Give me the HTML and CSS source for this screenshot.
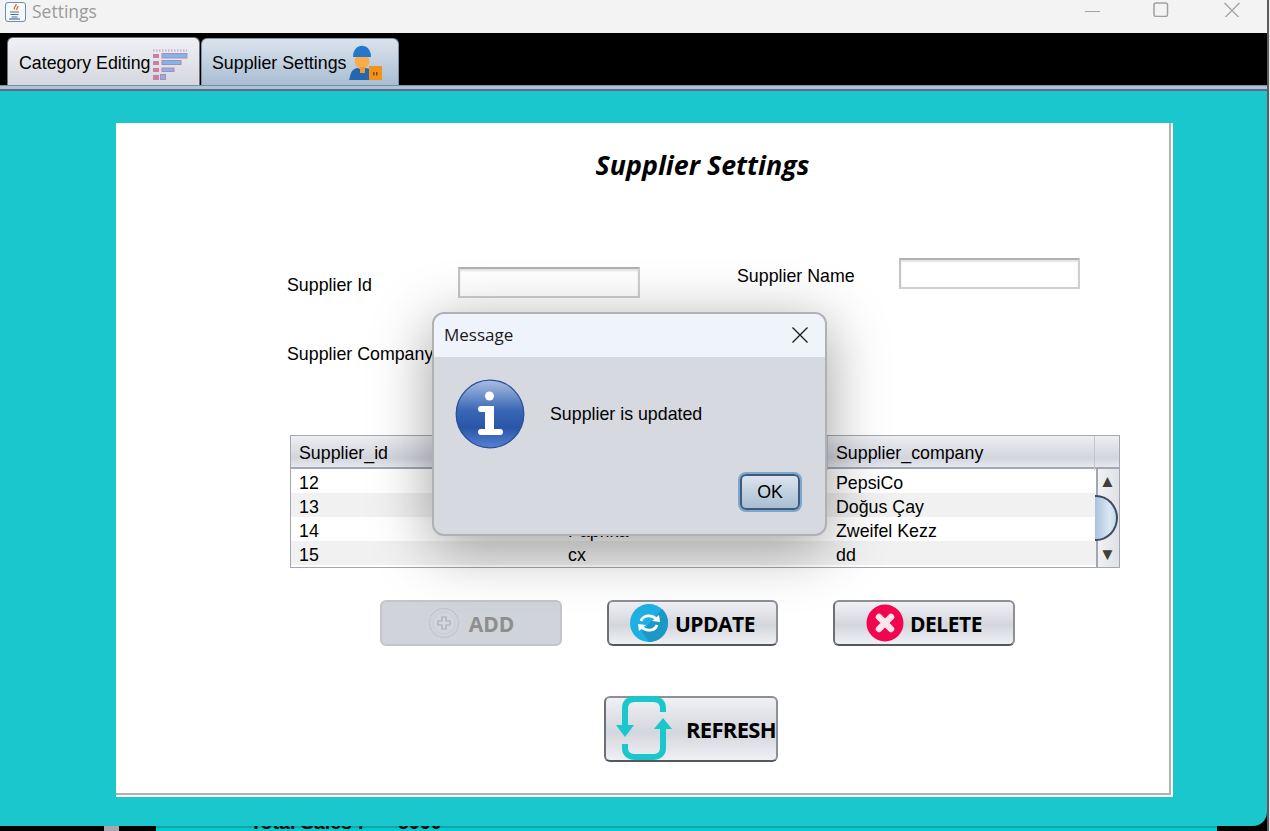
FILE: index.html
```html
<!DOCTYPE html>
<html lang="en">
<head>
<meta charset="utf-8">
<title>Settings</title>
<link rel="stylesheet" href="styles.css">
</head>
<body>
<div class="desktop">
  <div class="window">
    <header class="titlebar">
      <svg class="java" width="24" height="22" viewBox="0 0 24 22">
        <rect x="3.500" y="1.500" width="20" height="19" rx="2.500" fill="#f6f8fb" stroke="#6d8eb0"/>
        <path d="M14 3c1 2-3 3-1.500 5.500M16 5c0 2-2 2-1 4" fill="none" stroke="#e2711d" stroke-width="1.400"/>
        <path d="M8 11h9M8.500 13.500h8M9.500 16h6" stroke="#4d6f95" stroke-width="1.200"/>
        <path d="M7 18h11" stroke="#4d6f95" stroke-width="1.200"/>
      </svg>
      <span class="app-title">Settings</span>
      <div class="controls">
        <svg class="ctl-min" width="16" height="16" viewBox="0 0 16 16"><path d="M0 10.500h15" stroke="#a3a3a3" stroke-width="1"/></svg>
        <svg class="ctl-max" width="16" height="16" viewBox="0 0 16 16"><rect x="1" y="2" width="13.500" height="13.500" rx="2" fill="none" stroke="#a0a0a0" stroke-width="1.500"/></svg>
        <svg class="ctl-close" width="16" height="16" viewBox="0 0 16 16"><path d="M.5 2l15 15M15.500 2l-15 15" stroke="#a0a0a0" stroke-width="1.200"/></svg>
      </div>
    </header>

    <nav class="tabs">
      <div class="tab tab-inactive">
        <span class="tab-label">Category Editing</span>
        <svg width="36" height="33" viewBox="0 0 36 33">
          <path d="M0 2.500h34" stroke="#cdb4cc" stroke-width="2.500" stroke-dasharray="1.500 1.500"/>
          <rect x="9" y="5.500" width="25" height="4.500" fill="#7fb6e8" stroke="#b489b8"/>
          <rect x="9" y="12.500" width="19" height="4" fill="#7fb6e8" stroke="#a98ab8"/>
          <rect x="9" y="20" width="12" height="3.500" fill="#7fb6e8" stroke="#b489b8"/>
          <rect x="7.500" y="26.500" width="5" height="5" fill="#7fb6e8" stroke="#b489b8"/>
          <rect x="0" y="6" width="6" height="4" fill="#c77fa5"/>
          <rect x="0" y="13" width="6" height="4" fill="#c77fa5"/>
          <rect x="0" y="20" width="6" height="4" fill="#c77fa5"/>
          <rect x="0" y="27" width="6" height="5" fill="#c77fa5"/>
        </svg>
      </div>
      <div class="tab tab-active">
        <span class="tab-label">Supplier Settings</span>
        <svg width="34" height="36" viewBox="0 0 34 36">
          <path d="M0 35l2-7c1-3 4-5 7-5l4 2 4-2 4 1v11z" fill="#2566ad"/>
          <circle cx="13" cy="16" r="7.500" fill="#f8ad4a"/>
          <path d="M4 12C4-3 22-3 22 12z" fill="#2578c8"/>
          <rect x="11" y="22" width="5" height="6" fill="#f39a2d"/>
          <rect x="20" y="21" width="13" height="14" fill="#f39218"/>
          <rect x="24" y="27" width="1.500" height="3.500" fill="#7a4a10"/>
          <rect x="27" y="27" width="1.500" height="3.500" fill="#7a4a10"/>
        </svg>
      </div>
    </nav>
    <div class="tab-rule"></div>

    <main class="content">
      <section class="panel">
        <h1 class="heading">Supplier Settings</h1>

        <div class="form-row">
          <div class="field field-id">
            <label class="field-label">Supplier Id</label>
            <span class="input"></span>
          </div>
          <div class="field field-name">
            <label class="field-label">Supplier Name</label>
            <span class="input"></span>
          </div>
        </div>
        <div class="company"><label class="field-label">Supplier Company</label></div>

        <div class="table">
          <div class="table-head">
            <span class="th">Supplier_id</span>
            <span class="th">Supplier_name</span>
            <span class="th">Supplier_company</span>
            <span class="th"></span>
          </div>
          <div class="table-body">
            <div class="rows">
              <div class="row"><span>12</span><span>Lays</span><span>PepsiCo</span></div>
              <div class="row"><span>13</span><span>Lipton</span><span>Doğus Çay</span></div>
              <div class="row"><span>14</span><span>Paprika</span><span>Zweifel Kezz</span></div>
              <div class="row"><span>15</span><span>cx</span><span>dd</span></div>
            </div>
            <div class="scrollbar">
              <span class="arrow">▲</span>
              <span class="thumb"></span>
              <span class="arrow">▼</span>
            </div>
          </div>
        </div>

        <div class="actions">
          <button class="btn btn-disabled" disabled>
            <svg width="32" height="32" viewBox="0 0 32 32">
              <circle cx="16" cy="16" r="14.500" fill="none" stroke="#b9bbc0" stroke-width="1.200" stroke-dasharray="1.500 1"/>
              <circle cx="16" cy="16" r="11" fill="#d3d5da" stroke="#c9cbd0"/>
              <path d="M14 10h4v4h4v4h-4v4h-4v-4h-4v-4h4z" fill="#d6d8dd" stroke="#a9abb0" stroke-width="1.200"/>
            </svg>
            <span>ADD</span>
          </button>
          <button class="btn btn-update">
            <svg width="38" height="38" viewBox="0 0 38 38">
              <circle cx="19" cy="19" r="19" fill="#1fb0e3"/>
              <path d="M19 38a19 19 0 0 0 19-19 19 19 0 0 0-6-14L12 28z" fill="#1c98c6"/>
              <path d="M11 17c2-6 11-7 15-2" fill="none" stroke="#fff" stroke-width="2.800"/>
              <path d="M22 17l8 1-1-7z" fill="#fff"/>
              <path d="M27 21c-2 6-11 7-15 2" fill="none" stroke="#fff" stroke-width="2.800"/>
              <path d="M16 21l-8-1 1 7z" fill="#fff"/>
            </svg>
            <span>UPDATE</span>
          </button>
          <button class="btn btn-delete">
            <svg width="38" height="38" viewBox="0 0 38 38">
              <circle cx="19" cy="19" r="18.500" fill="#f2044f"/>
              <path d="M13 13l12 12M25 13L13 25" stroke="#fbe4ec" stroke-width="6.500" stroke-linecap="round"/>
            </svg>
            <span>DELETE</span>
          </button>
        </div>

        <div class="refresh-row">
          <button class="btn btn-refresh">
            <svg width="56" height="64" viewBox="0 0 56 64">
              <path d="M47 16V12C47 6 43 3 37 3H19C13 3 9 6 9 12V30" fill="none" stroke="#19c7cd" stroke-width="6"/>
              <path d="M0 29h18L9 41z" fill="#19c7cd"/>
              <path d="M9 48V52C9 58 13 61 19 61H37C43 61 47 58 47 52V30" fill="none" stroke="#19c7cd" stroke-width="6"/>
              <path d="M38 33H56L47 22z" fill="#19c7cd"/>
            </svg>
            <span>REFRESH</span>
          </button>
        </div>
      </section>
    </main>
  </div>

  <div class="behind">
    <div class="behind-dark"><span class="behind-knob"></span></div>
    <div class="behind-teal"><span class="behind-text">Total Sales :</span><span class="behind-text">5000</span></div>
    <div class="behind-black"></div>
  </div>
  <div class="edge"></div>

  <aside class="dialog" role="dialog">
    <div class="dialog-title">
      <span>Message</span>
      <svg width="16" height="16" viewBox="0 0 16 16"><path d="M.5.5l15 15M15.500.5l-15 15" stroke="#1a1a1a" stroke-width="1.300"/></svg>
    </div>
    <div class="dialog-body">
      <div class="dialog-message">
        <svg width="70" height="70" viewBox="0 0 70 70">
          <defs>
            <linearGradient id="infoFill" x1="0" y1="0" x2="0" y2="1">
              <stop offset="0" stop-color="#a9bfe2"/>
              <stop offset=".45" stop-color="#3a66b5"/>
              <stop offset=".7" stop-color="#2a55a8"/>
              <stop offset="1" stop-color="#5580d4"/>
            </linearGradient>
          </defs>
          <circle cx="35" cy="35" r="33.800" fill="url(#infoFill)" stroke="#2b4f96" stroke-width="1.300"/>
          <circle cx="34.500" cy="17" r="4.500" fill="#fff"/>
          <path d="M26 27h13v23h6a2.800 2.800 0 0 1 0 6H26a2.800 2.800 0 0 1 0-6h4V33h-4a3 3 0 0 1 0-6z" fill="#fff"/>
        </svg>
        <span>Supplier is updated</span>
      </div>
      <div class="dialog-actions">
        <button class="ok">OK</button>
      </div>
    </div>
  </aside>
</div>
</body>
</html>
```

FILE: styles.css
```css
* { box-sizing: border-box; }
html, body { margin: 0; height: 831px; overflow: hidden; background: #000; }
.desktop { position: relative; width: 1270px; height: 831px; overflow: hidden; font-family: "Liberation Sans", Arial, sans-serif; color: #000; background: #000; }
.edge { position: absolute; left: 1267px; top: 0; width: 3px; height: 831px; background: #5b5b5b; border-right: 1px solid #f0f0f0; z-index: 1; }

.window { width: 1267px; height: 826px; display: flex; flex-direction: column; background: #19c7cd; border-bottom-right-radius: 14px; overflow: hidden; position: relative; z-index: 1; }
.titlebar { height: 33px; flex: none; background: #f3f3f3; display: flex; align-items: flex-start; padding-left: 2px; }
.java { margin-top: 1px; }
.app-title { font: 17.500px/22px "Open Sans", sans-serif; color: #9a9a9a; margin-left: 6px; }
.controls { margin-left: auto; display: flex; padding-right: 27px; }
.controls svg { display: block; margin-top: 1px; }
.ctl-max { margin-left: 52px; }
.ctl-close { margin-left: 55px; }

.tabs { height: 52px; flex: none; background: #000; display: flex; align-items: flex-end; padding-left: 7px; gap: 1px; }
.tab { display: flex; align-items: center; border-radius: 6px 6px 0 0; }
.tab-label { font-size: 17.800px; white-space: nowrap; padding-top: 3px; }
.tab-inactive { width: 193px; height: 48px; padding-left: 11px; background: linear-gradient(#f0f1f5, #d5d7de); border: 1px solid #71747e; border-bottom: 0; }
.tab-inactive svg { flex: none; margin-top: 6px; margin-left: 3px; }
.tab-active { width: 198px; height: 47px; padding-left: 10px; background: linear-gradient(#dae3ec, #a9bdd3); border: 1px solid #7f90a5; border-bottom: 0; }
.tab-active svg { flex: none; margin-left: 3px; margin-top: 1px; }
.tab-rule { height: 6px; flex: none; background: #aec2db; border-top: 1px solid #7e8ca0; border-bottom: 2px solid #5d6a80; }

.content { flex: 1; padding: 32px 94px 0 116px; }
.panel { width: 1057px; height: 674px; background: #fff; border: solid #fff; border-width: 0 2px 2px 0; box-shadow: inset -2px -2px 0 #b0b0b0; padding-top: 24px; display: flex; flex-direction: column; }
.heading { margin: 0; height: 36px; text-align: center; padding-left: 118px; font: italic 700 26.800px/36px "Open Sans", sans-serif; }

.form-row { display: flex; margin-top: 75px; padding-left: 171px; height: 65px; }
.field { display: flex; align-items: flex-start; }
.field-label { font-size: 17.800px; line-height: 20px; white-space: nowrap; }
.field-id { width: 450px; }
.field-id .field-label { width: 171px; margin-top: 17px; }
.field-name .field-label { width: 162px; margin-top: 8px; }
.field-id .input { margin-top: 9px; width: 182px; }
.input { width: 181px; height: 31px; display: block; background: #fff; border: 2px solid #cfcfcf; border-top-color: #b0b0b0; border-left-color: #c4c4c4; box-shadow: inset 0 2px 2px #e4e4e4; }
.company { padding-left: 171px; height: 109px; padding-top: 21px; }

.table { margin-left: 174px; width: 830px; height: 133px; border: 1px solid #a3a7b3; background: #fff; margin-top: 3px; }
.table-head { height: 33px; display: grid; grid-template-columns: 269px 268px 267px 24px; background: linear-gradient(#eceef3, #d3d5dd 70%, #e6e8ee); border-bottom: 2px solid #a3a7b3; }
.th { font-size: 17.800px; line-height: 34px; padding-left: 8px; border-right: 1px solid #c3c6ce; white-space: nowrap; }
.th:last-child { border-right: 0; }
.table-body { display: flex; height: 98px; }
.rows { width: 805px; }
.row { height: 24px; display: grid; grid-template-columns: 269px 268px 268px; font-size: 17.800px; line-height: 29px; overflow: hidden; }
.row span { padding-left: 8px; white-space: nowrap; }
.row:nth-child(even) { background: #f1f1f1; }
.scrollbar { width: 23px; position: relative; border-left: 2px solid #a3a7b3; background: linear-gradient(90deg, #f0f1f4, #dfe1e7); display: flex; flex-direction: column; justify-content: space-between; align-items: center; }
.arrow { font-size: 17px; line-height: 25px; color: #3f3f3f; margin-right: 2px; }
.thumb { position: absolute; left: -3px; top: 26px; width: 23px; height: 46px; border-radius: 0 22px 22px 0 / 0 23px 23px 0; border: 2px solid #3d4c60; border-left: 0; background: linear-gradient(90deg, #a9c3de, #dbe8f3 70%, #c5d8ea); }

.actions { display: flex; padding-left: 264px; margin-top: 32px; height: 46px; }
.btn { height: 46px; width: 182px; display: flex; align-items: center; justify-content: center; gap: 7px; padding: 0; font: 700 21px "Open Sans", sans-serif; letter-spacing: -.5px; color: #000; background: linear-gradient(#f0f1f5, #d4d6dd 55%, #eef0f4); border: 2px solid #8e9095; border-bottom-color: #55585f; border-left-color: #6d7076; border-radius: 6px; }
.actions .btn span { padding-top: 2px; }
.btn-update { width: 171px; margin-left: 45px; }
.btn-delete { margin-left: 55px; gap: 6px; }
.btn-disabled { color: #8e8e8e; background: #d0d3d9; border-color: #c3c5cb; gap: 9px; letter-spacing: 0; }
.refresh-row { padding-left: 488px; margin-top: 50px; }
.btn-refresh { width: 174px; height: 66px; gap: 14px; justify-content: flex-start; padding-left: 10px; font-size: 22px; letter-spacing: -.7px; }
.btn-refresh svg { flex: none; margin-top: -2px; }

.behind { height: 5px; display: flex; position: absolute; left: 0; top: 826px; width: 1270px; }
.behind-dark { width: 156px; background: #000; position: relative; }
.behind-knob { position: absolute; left: 104px; top: 0; width: 15px; height: 5px; background: #a5a7ad; }
.behind-teal { width: 1061px; background: linear-gradient(#14a5aa 2px, #00cbd1 2px); position: relative; overflow: hidden; display: flex; gap: 34px; padding-left: 94px; }
.behind-text { font-weight: 700; font-size: 19.600px; line-height: 22px; margin-top: -15px; height: 22px; white-space: nowrap; }
.behind-black { flex: 1; background: #000; }

.dialog { position: absolute; left: 432px; top: 312px; width: 395px; height: 224px; z-index: 2; border: 2px solid #b1b1b3; border-radius: 12px; overflow: hidden; background: #d6d9e0; box-shadow: 0 12px 60px rgba(0, 0, 0, .38); display: flex; flex-direction: column; }
.dialog-title { height: 43px; flex: none; background: #eff3fb; display: flex; align-items: center; justify-content: space-between; padding: 0 17px 2px 10px; font: 17px "Open Sans", sans-serif; color: #1a1a1a; }
.dialog-body { flex: 1; display: flex; flex-direction: column; }
.dialog-message { display: flex; align-items: center; padding: 22px 0 0 21px; gap: 25px; font-size: 17.800px; }
.dialog-actions { display: flex; justify-content: flex-end; padding: 25px 25px 0 0; }
.ok { width: 60px; height: 36px; font: 17.800px "Liberation Sans", sans-serif; color: #000; background: linear-gradient(#dbe4ed, #a8bed3); border: 2px solid #3f5a7a; border-radius: 6px; box-shadow: 0 0 0 2px #7ea7cf; }
```
